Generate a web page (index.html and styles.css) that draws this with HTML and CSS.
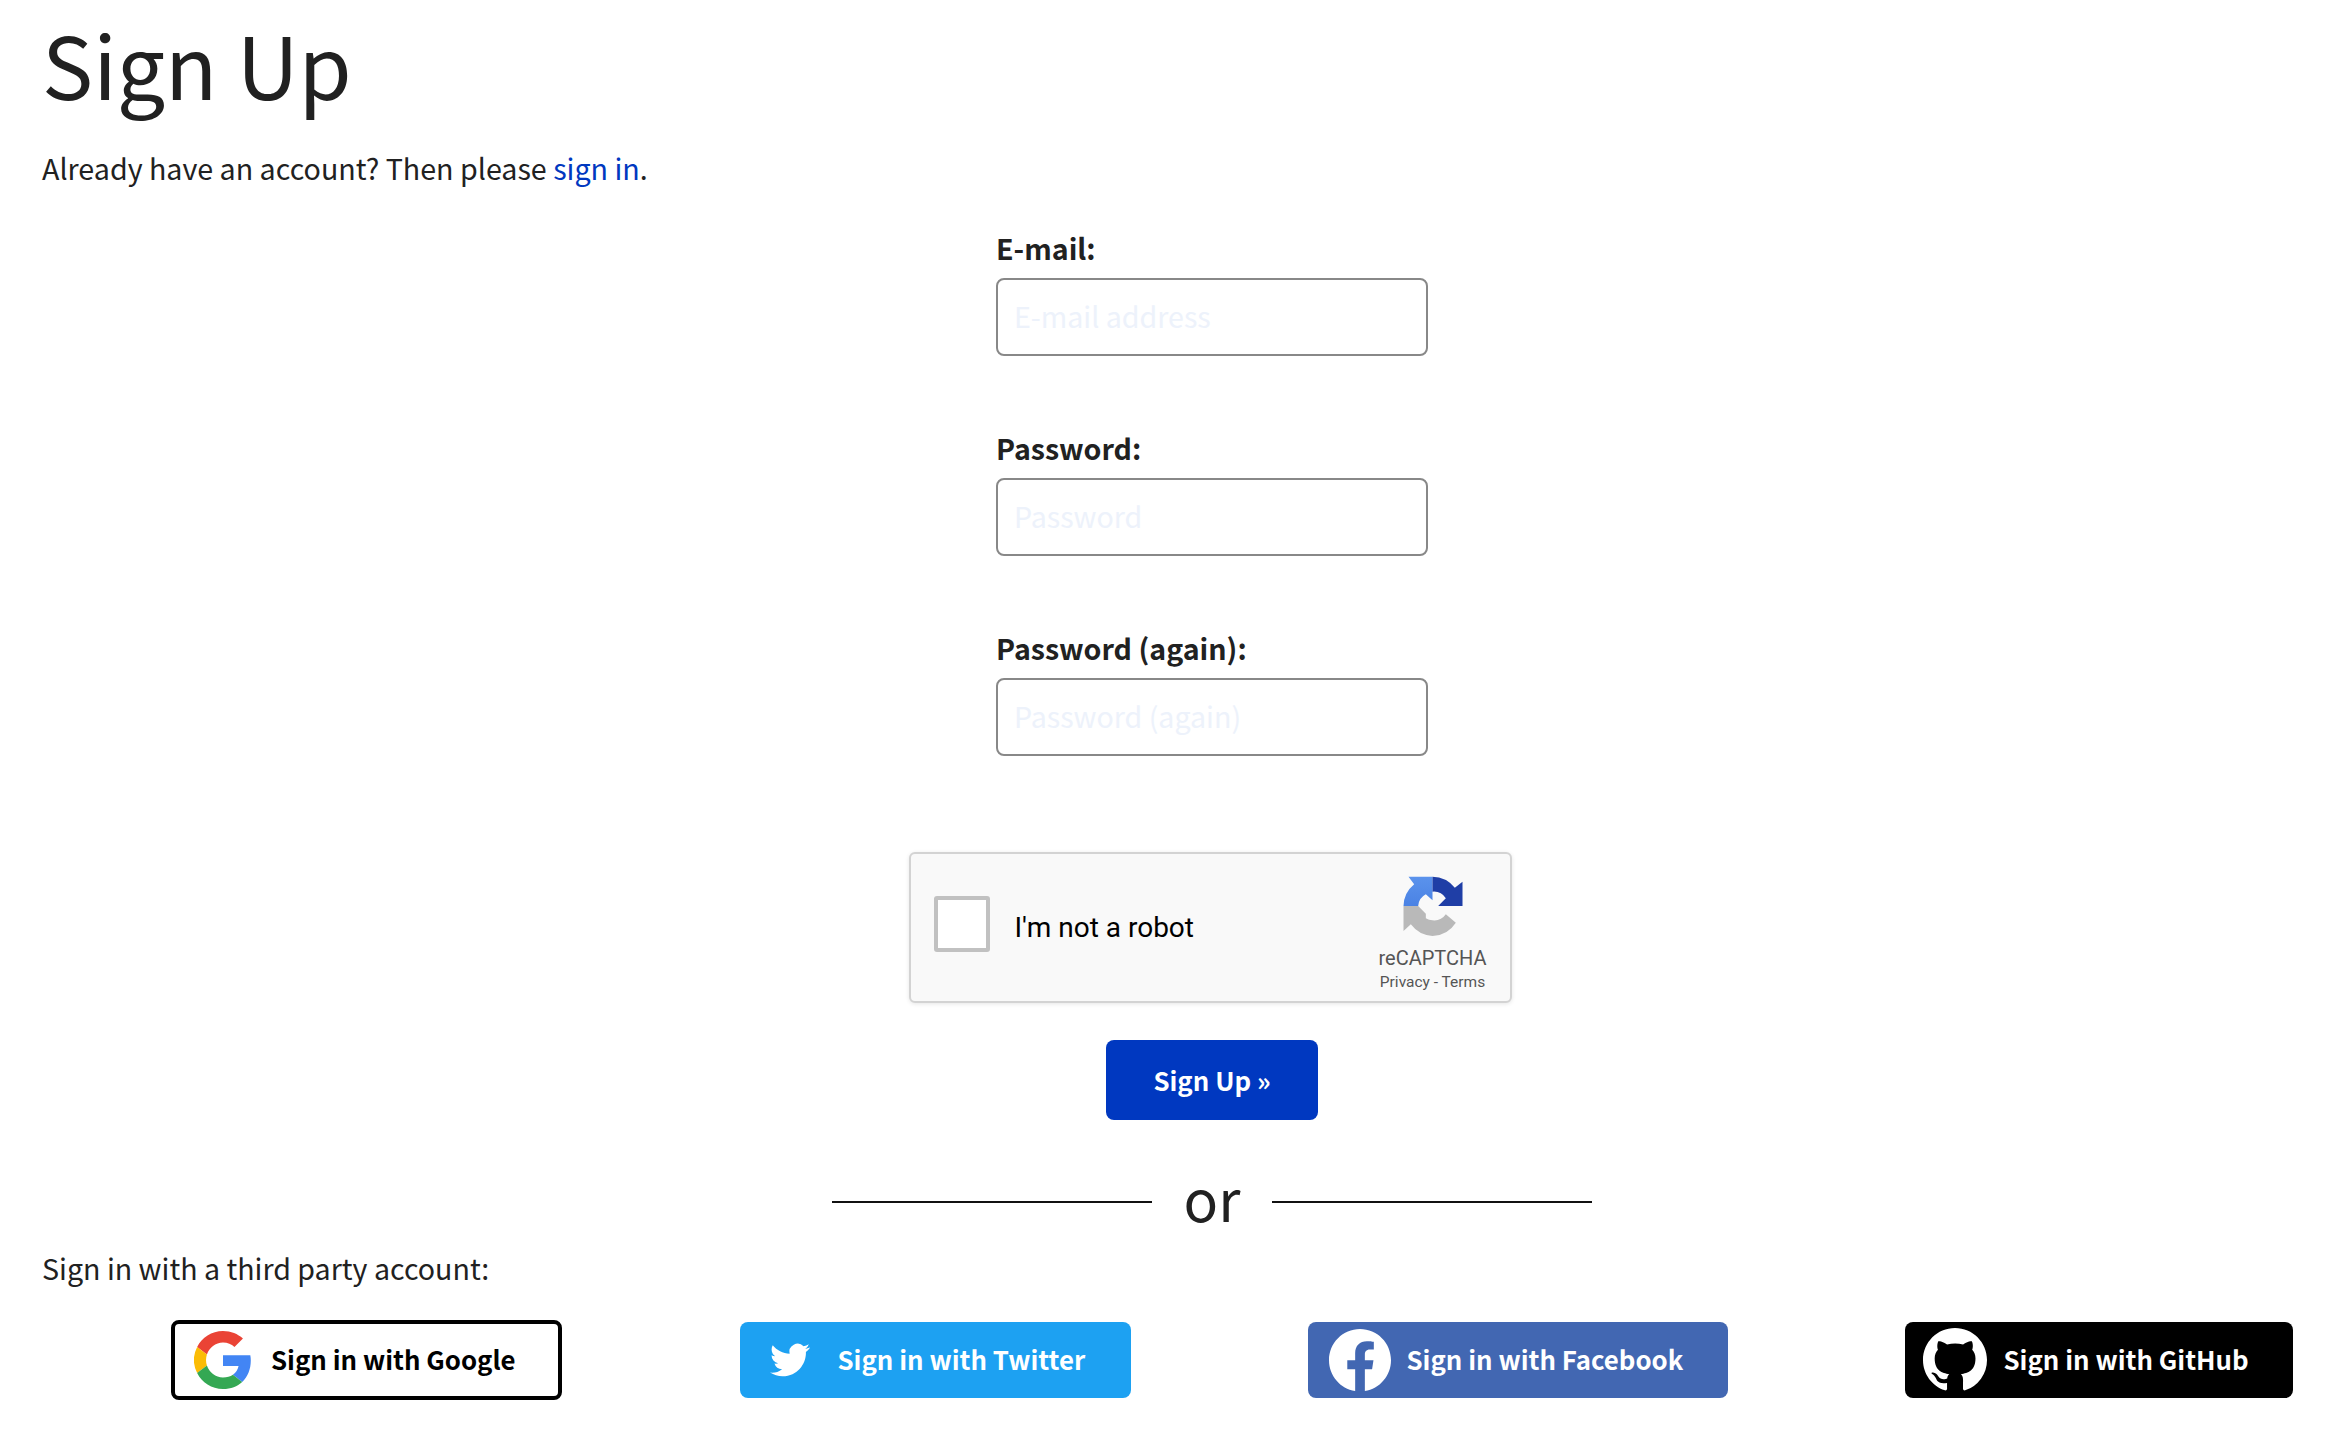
FILE: index.html
```html
<!DOCTYPE html>
<html lang="en">
<head>
<meta charset="utf-8">
<title>Sign Up</title>
<link rel="stylesheet" href="styles.css">
</head>
<body>
<main class="page">
  <h1 class="title">Sign Up</h1>
  <p class="intro">Already have an account? Then please <a class="link" href="#">sign in</a>.</p>
  <form class="form">
    <div class="field">
      <label class="label">E-mail:</label>
      <input class="input" type="text" placeholder="E-mail address">
    </div>
    <div class="field">
      <label class="label">Password:</label>
      <input class="input" type="text" placeholder="Password">
    </div>
    <div class="field">
      <label class="label">Password (again):</label>
      <input class="input" type="text" placeholder="Password (again)">
    </div>
    <div class="captcha">
      <span class="check"></span>
      <span class="robot">I'm not a robot</span>
      <div class="badge">
        <svg class="badge-logo" viewBox="0 0 177 180">
          <defs>
            <linearGradient id="lb" x1="0" y1="0" x2="0" y2="1"><stop offset="0" stop-color="#5b93ec"/><stop offset="1" stop-color="#4a82e4"/></linearGradient>
          </defs>
          <path fill="#b9b9b9" d="M0 90V165L22 145A88 88 0 0 0 87 180 88 88 0 0 0 157 140L127 115A43 43 0 0 1 87 133 43 43 0 0 1 67 127V113L44 90Z"/>
          <path fill="url(#lb)" d="M0 90A87 87 0 0 1 32 25L15 2H87V73L67 55A43 43 0 0 0 44 90Z"/>
          <path fill="#1f3ea6" d="M87 2A88 88 0 0 1 154 35L177 17V90H104L127 67A43 43 0 0 0 87 47Z"/>
        </svg>
        <span class="badge-name">reCAPTCHA</span>
        <span class="badge-links">Privacy - Terms</span>
      </div>
    </div>
    <button class="submit" type="button">Sign Up »</button>
  </form>
  <div class="divider"><span class="rule"></span><span class="or">or</span><span class="rule"></span></div>
  <p class="third">Sign in with a third party account:</p>
  <div class="socials">
    <a class="social google" href="#">
      <svg class="icon-g" viewBox="0 0 48 48">
        <path fill="#ea4335" d="M24 9.500c3.900 0 6.900 1.300 9.500 3.700l7-7C36.200 2.400 30.700 0 24 0 14.600 0 6.500 5.400 2.600 13.200l8.100 6.300C12.600 13.700 17.800 9.500 24 9.500z"/>
        <path fill="#4285f4" d="M47 24.500c0-1.600-.1-3.100-.4-4.500H24v9h12.900c-.6 3-2.200 5.500-4.700 7.200l7.700 6c4.500-4.200 7.100-10.300 7.100-17.700z"/>
        <path fill="#fbbc05" d="M10.700 28.600A14.400 14.400 0 0 1 10.700 19.500l-8.100-6.300A24 24 0 0 0 2.600 34.800z"/>
        <path fill="#34a853" d="M24 48c6.500 0 11.900-2.100 15.900-5.800l-7.700-6c-2.200 1.400-4.900 2.300-8.200 2.300-6.200 0-11.400-4.200-13.300-9.900l-8.100 6.200C6.500 42.600 14.600 48 24 48z"/>
      </svg>
      <span class="social-text">Sign in with Google</span>
    </a>
    <a class="social twitter" href="#">
      <svg class="icon-t" viewBox="0 0 24 24"><path fill="#fff" d="M23.950 4.570a10 10 0 0 1-2.820.77 4.960 4.960 0 0 0 2.160-2.720c-.95.550-2 .960-3.130 1.190a4.920 4.920 0 0 0-8.380 4.480C7.690 8.100 4.070 6.130 1.640 3.160a4.820 4.820 0 0 0-.67 2.480c0 1.710.87 3.210 2.190 4.100a4.900 4.900 0 0 1-2.230-.62v.06a4.920 4.920 0 0 0 3.950 4.830 5 5 0 0 1-2.210.08 4.940 4.940 0 0 0 4.600 3.420A9.870 9.870 0 0 1 0 19.540a14 14 0 0 0 7.560 2.210c9.050 0 14-7.500 14-13.980 0-.21 0-.42-.02-.63a9.940 9.940 0 0 0 2.460-2.550z"/></svg>
      <span class="social-text">Sign in with Twitter</span>
    </a>
    <a class="social facebook" href="#">
      <svg class="icon-f" viewBox="0 0 24 24"><path fill="#fff" d="M24 12.070C24 5.400 18.630 0 12 0S0 5.400 0 12.070c0 6.030 4.390 11.020 10.130 11.930v-8.440H7.080v-3.490h3.050V9.410c0-3.020 1.790-4.690 4.530-4.690 1.310 0 2.690.24 2.690.24v2.970h-1.510c-1.490 0-1.960.93-1.960 1.880v2.260h3.330l-.53 3.490h-2.800V24C19.610 23.090 24 18.100 24 12.070z"/></svg>
      <span class="social-text">Sign in with Facebook</span>
    </a>
    <a class="social github" href="#">
      <svg class="icon-h" viewBox="0 0 16 16"><path fill="#fff" d="M8 0C3.580 0 0 3.580 0 8c0 3.540 2.290 6.530 5.470 7.590.4.070.55-.17.55-.38 0-.19-.01-.82-.01-1.490-2.010.37-2.530-.49-2.690-.94-.09-.23-.48-.94-.82-1.130-.28-.15-.68-.52-.01-.53.63-.01 1.080.58 1.230.82.720 1.210 1.870.87 2.330.66.070-.52.280-.87.510-1.070-1.780-.2-3.640-.89-3.640-3.950 0-.87.310-1.590.820-2.150-.08-.2-.36-1.020.08-2.120 0 0 .67-.21 2.200.82.640-.18 1.320-.27 2-.27s1.360.09 2 .27c1.530-1.040 2.200-.82 2.200-.82.440 1.100.16 1.920.08 2.120.51.560.82 1.270.82 2.150 0 3.070-1.870 3.750-3.650 3.950.29.250.54.730.54 1.480 0 1.070-.01 1.930-.01 2.200 0 .21.15.46.55.38A8.010 8.010 0 0 0 16 8c0-4.420-3.580-8-8-8z"/></svg>
      <span class="social-text">Sign in with GitHub</span>
    </a>
  </div>
</main>
</body>
</html>
```
FILE: styles.css
```css
* { box-sizing: border-box; }
html, body { margin: 0; padding: 0; background: #fff; }
body {
  font-family: "Noto Sans CJK SC", "Open Sans", sans-serif;
  color: #212121;
  font-size: 28.6px;
}
.page { height: 1438px; padding-left: 42px; overflow: hidden; }
.title { margin: 0; padding-top: 13px; font-size: 85.8px; font-weight: 400; line-height: 100px; height: 118px; color: #212121; }
.intro { margin: 28px 0 0; line-height: 44px; height: 46px; font-size: 28.65px; }
.link { color: #0038c0; text-decoration: none; }
.form { display: flex; flex-direction: column; align-items: center; margin-left: 40px; margin-top: 33px; }
.field { width: 432px; height: 200px; }
.label { display: block; font-weight: 700; line-height: 46px; height: 46px; margin-bottom: 7px; }
.input { display: block; width: 432px; height: 78px; border: 2px solid #888; border-radius: 8px; padding: 0 16px 3px; font: inherit; background: #fff; outline: none; }
.input::placeholder { color: #edf2fb; opacity: 1; }
.captcha { display: flex; align-items: flex-start; width: 603px; height: 151px; margin: 27px 4px 0 0; padding: 22px 23px 0 23px; background: #f9f9f9; border: 2px solid #d3d3d3; border-radius: 6px; box-shadow: 0 1px 4px rgba(0,0,0,.1); font-family: Roboto, sans-serif; }
.check { width: 56px; height: 56px; margin-top: 20px; background: #fff; border: 4px solid #c1c1c1; border-radius: 3px; flex: none; }
.robot { margin: 24px 0 0 25px; font-size: 28px; line-height: 56px; color: #000; flex: 1; }
.badge { display: flex; flex-direction: column; align-items: center; color: #555; width: 112px; margin-right: -2px; }
.badge-logo { width: 60px; height: 60px; flex: none; }
.badge-name { font-size: 20px; line-height: 26px; margin-top: 9px; }
.badge-links { font-size: 15.5px; line-height: 20px; margin-top: 1px; }
.submit { width: 212px; height: 80px; margin-top: 37px; padding-bottom: 2px; border: 0; border-radius: 8px; background: #0038c0; color: #fff; font: 700 25.8px/1 "Noto Sans CJK SC", sans-serif; }
.divider { display: flex; align-items: center; justify-content: center; margin: 50px 0 0 40px; height: 64px; }
.rule { width: 320px; height: 2px; background: #111; }
.or { width: 120px; margin-top: -10px; text-align: center; font-size: 57.2px; line-height: 64px; }
.third { margin: 11px 0 0; line-height: 46px; height: 46px; }
.socials { display: flex; align-items: center; gap: 177px; margin: 29px 0 0 129px; height: 80px; }
.social { display: flex; align-items: center; height: 76px; border-radius: 8px; color: #fff; font-weight: 700; font-size: 25.8px; text-decoration: none; }
.social-text { line-height: 36px; margin-bottom: 2px; }
.google { width: 391px; height: 80px; margin-right: 1px; background: #fff; color: #000; border: 4px solid #000; padding-left: 19px; gap: 19px; }
.icon-g { width: 58px; height: 58px; flex: none; }
.twitter { width: 391px; background: #1da1f2; padding-left: 30px; gap: 27.5px; }
.icon-t { width: 40px; height: 40px; flex: none; }
.facebook { width: 420px; background: #4267b2; padding-left: 21px; gap: 15.5px; }
.icon-f { width: 62px; height: 62px; flex: none; }
.github { width: 388px; background: #000; padding-left: 18px; gap: 16.5px; }
.icon-h { width: 64px; height: 64px; flex: none; }
```
